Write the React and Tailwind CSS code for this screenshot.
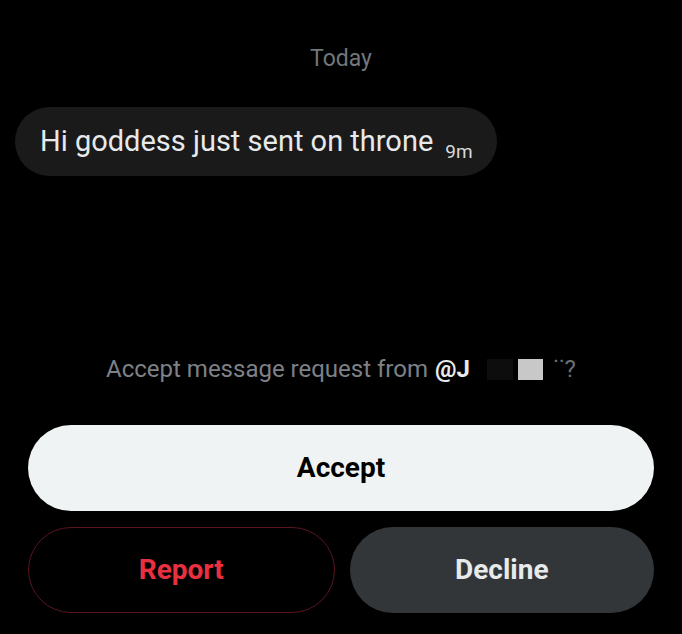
export default function App() {
  return (
    <div className="min-h-[634px] w-full bg-black font-['Roboto',sans-serif] flex flex-col pt-[45px] overflow-hidden">
      {/* date divider */}
      <div className="text-center text-[23px] leading-[27px] text-[#71767b]">Today</div>

      {/* received message */}
      <div className="mt-[35px] ml-[15px] self-start h-[69px] rounded-full bg-[#1a1a1b] pl-[25px] pr-[24px] pt-[3px] flex items-center">
        <span className="text-[29px] text-[#e7e9ea] whitespace-nowrap">
          Hi goddess just sent on throne
          <span className="ml-[12px] text-[19px] text-[#d6d9db] align-[-7px]">9m</span>
        </span>
      </div>

      {/* request prompt */}
      <div className="mt-[179px] flex items-center justify-center text-[24px] leading-[28px] text-[#7d8187] whitespace-nowrap">
        <span>Accept message request from</span>
        <span className="ml-[7px] font-bold text-[#e7e9ea]">@J</span>
        <span className="ml-[17px] w-[26px] h-[21px] bg-[#0d0d0d]" />
        <span className="ml-[5px] w-[25px] h-[21px] bg-[#c8c8c8]" />
        <span className="ml-[10px] text-[#6b6f74]">˙˙?</span>
      </div>

      {/* actions */}
      <div className="mt-[42px] px-[28px] flex flex-col gap-[16px]">
        <button className="h-[86px] w-full rounded-full bg-[#eff3f4] text-black text-[28px] font-bold">
          Accept
        </button>
        <div className="flex gap-[15px]">
          <button className="flex-1 h-[86px] rounded-full border border-[#5c1520] bg-black text-[#e8303f] text-[28px] font-bold">
            Report
          </button>
          <button className="flex-1 h-[86px] rounded-full bg-[#333639] text-[#e7e9ea] text-[28px] font-bold">
            Decline
          </button>
        </div>
      </div>
    </div>
  );
}
